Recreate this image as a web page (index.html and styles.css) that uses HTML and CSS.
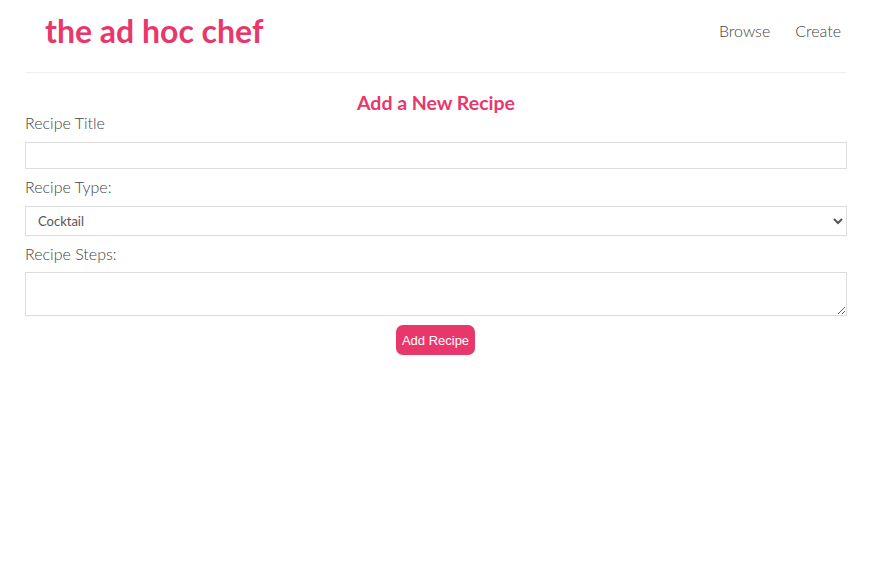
FILE: index.html
```html
<!DOCTYPE html>
<html>
<head>
<meta charset="utf-8">
<link rel="stylesheet" href="styles.css">
</head>
<body>
<div class="page">
  <header class="header">
    <div class="logo">the ad hoc chef</div>
    <nav class="nav">
      <a href="#">Browse</a>
      <a href="#">Create</a>
    </nav>
  </header>
  <main class="main">
    <h2 class="title">Add a New Recipe</h2>
    <form class="form">
      <label class="label">Recipe Title</label>
      <input class="field input" type="text">
      <label class="label">Recipe Type:</label>
      <select class="field select">
        <option>Cocktail</option>
      </select>
      <label class="label">Recipe Steps:</label>
      <textarea class="field textarea"></textarea>
      <div class="actions">
        <button class="btn" type="button">Add Recipe</button>
      </div>
    </form>
  </main>
</div>
</body>
</html>
```
FILE: styles.css
```css
* { box-sizing: border-box; }
html, body { margin: 0; padding: 0; background: #fff; }
body { font-family: "Lato", "Open Sans", sans-serif; color: #444; }
.page { padding: 0 23px 0 25px; }
.header {
  display: flex;
  justify-content: space-between;
  align-items: center;
  height: 73px;
  border-bottom: 1px solid #eee;
  padding: 0 6px 0 20px;
}
.logo {
  color: #e8386b;
  font-size: 32px;
  font-weight: 700;
  margin-top: -12px;
}
.nav { display: flex; gap: 25px; margin-top: -11px; }
.nav a { color: #444; text-decoration: none; font-size: 16px; font-weight: 300; }
.main { padding-top: 19px; }
.title {
  margin: 0;
  text-align: center;
  color: #e8386b;
  font-size: 19.5px;
  font-weight: 700;
  line-height: 22px;
}
.form { display: flex; flex-direction: column; }
.label { font-size: 16px; line-height: 20px; margin: -1px 0 9px; font-weight: 300; }
.field {
  width: 100%;
  border: 1px solid #ddd;
  background: #fff;
  font-family: inherit;
  margin: 0 0 9px;
  border-radius: 0;
}
.input { height: 27px; }
.select {
  height: 30px;
  font-size: 13px;
  color: #555;
  padding: 0 8px;
}
.textarea { height: 44px; resize: vertical; margin-top: -1px; }
.actions { display: flex; justify-content: center; }
.btn {
  background: #e8386b;
  color: #fff;
  border: none;
  border-radius: 7px;
  font-family: "Liberation Sans", Arial, sans-serif;
  font-size: 13px;
  width: 79px;
  height: 30px;
  padding: 0;
  margin-left: -1px;
}
```
